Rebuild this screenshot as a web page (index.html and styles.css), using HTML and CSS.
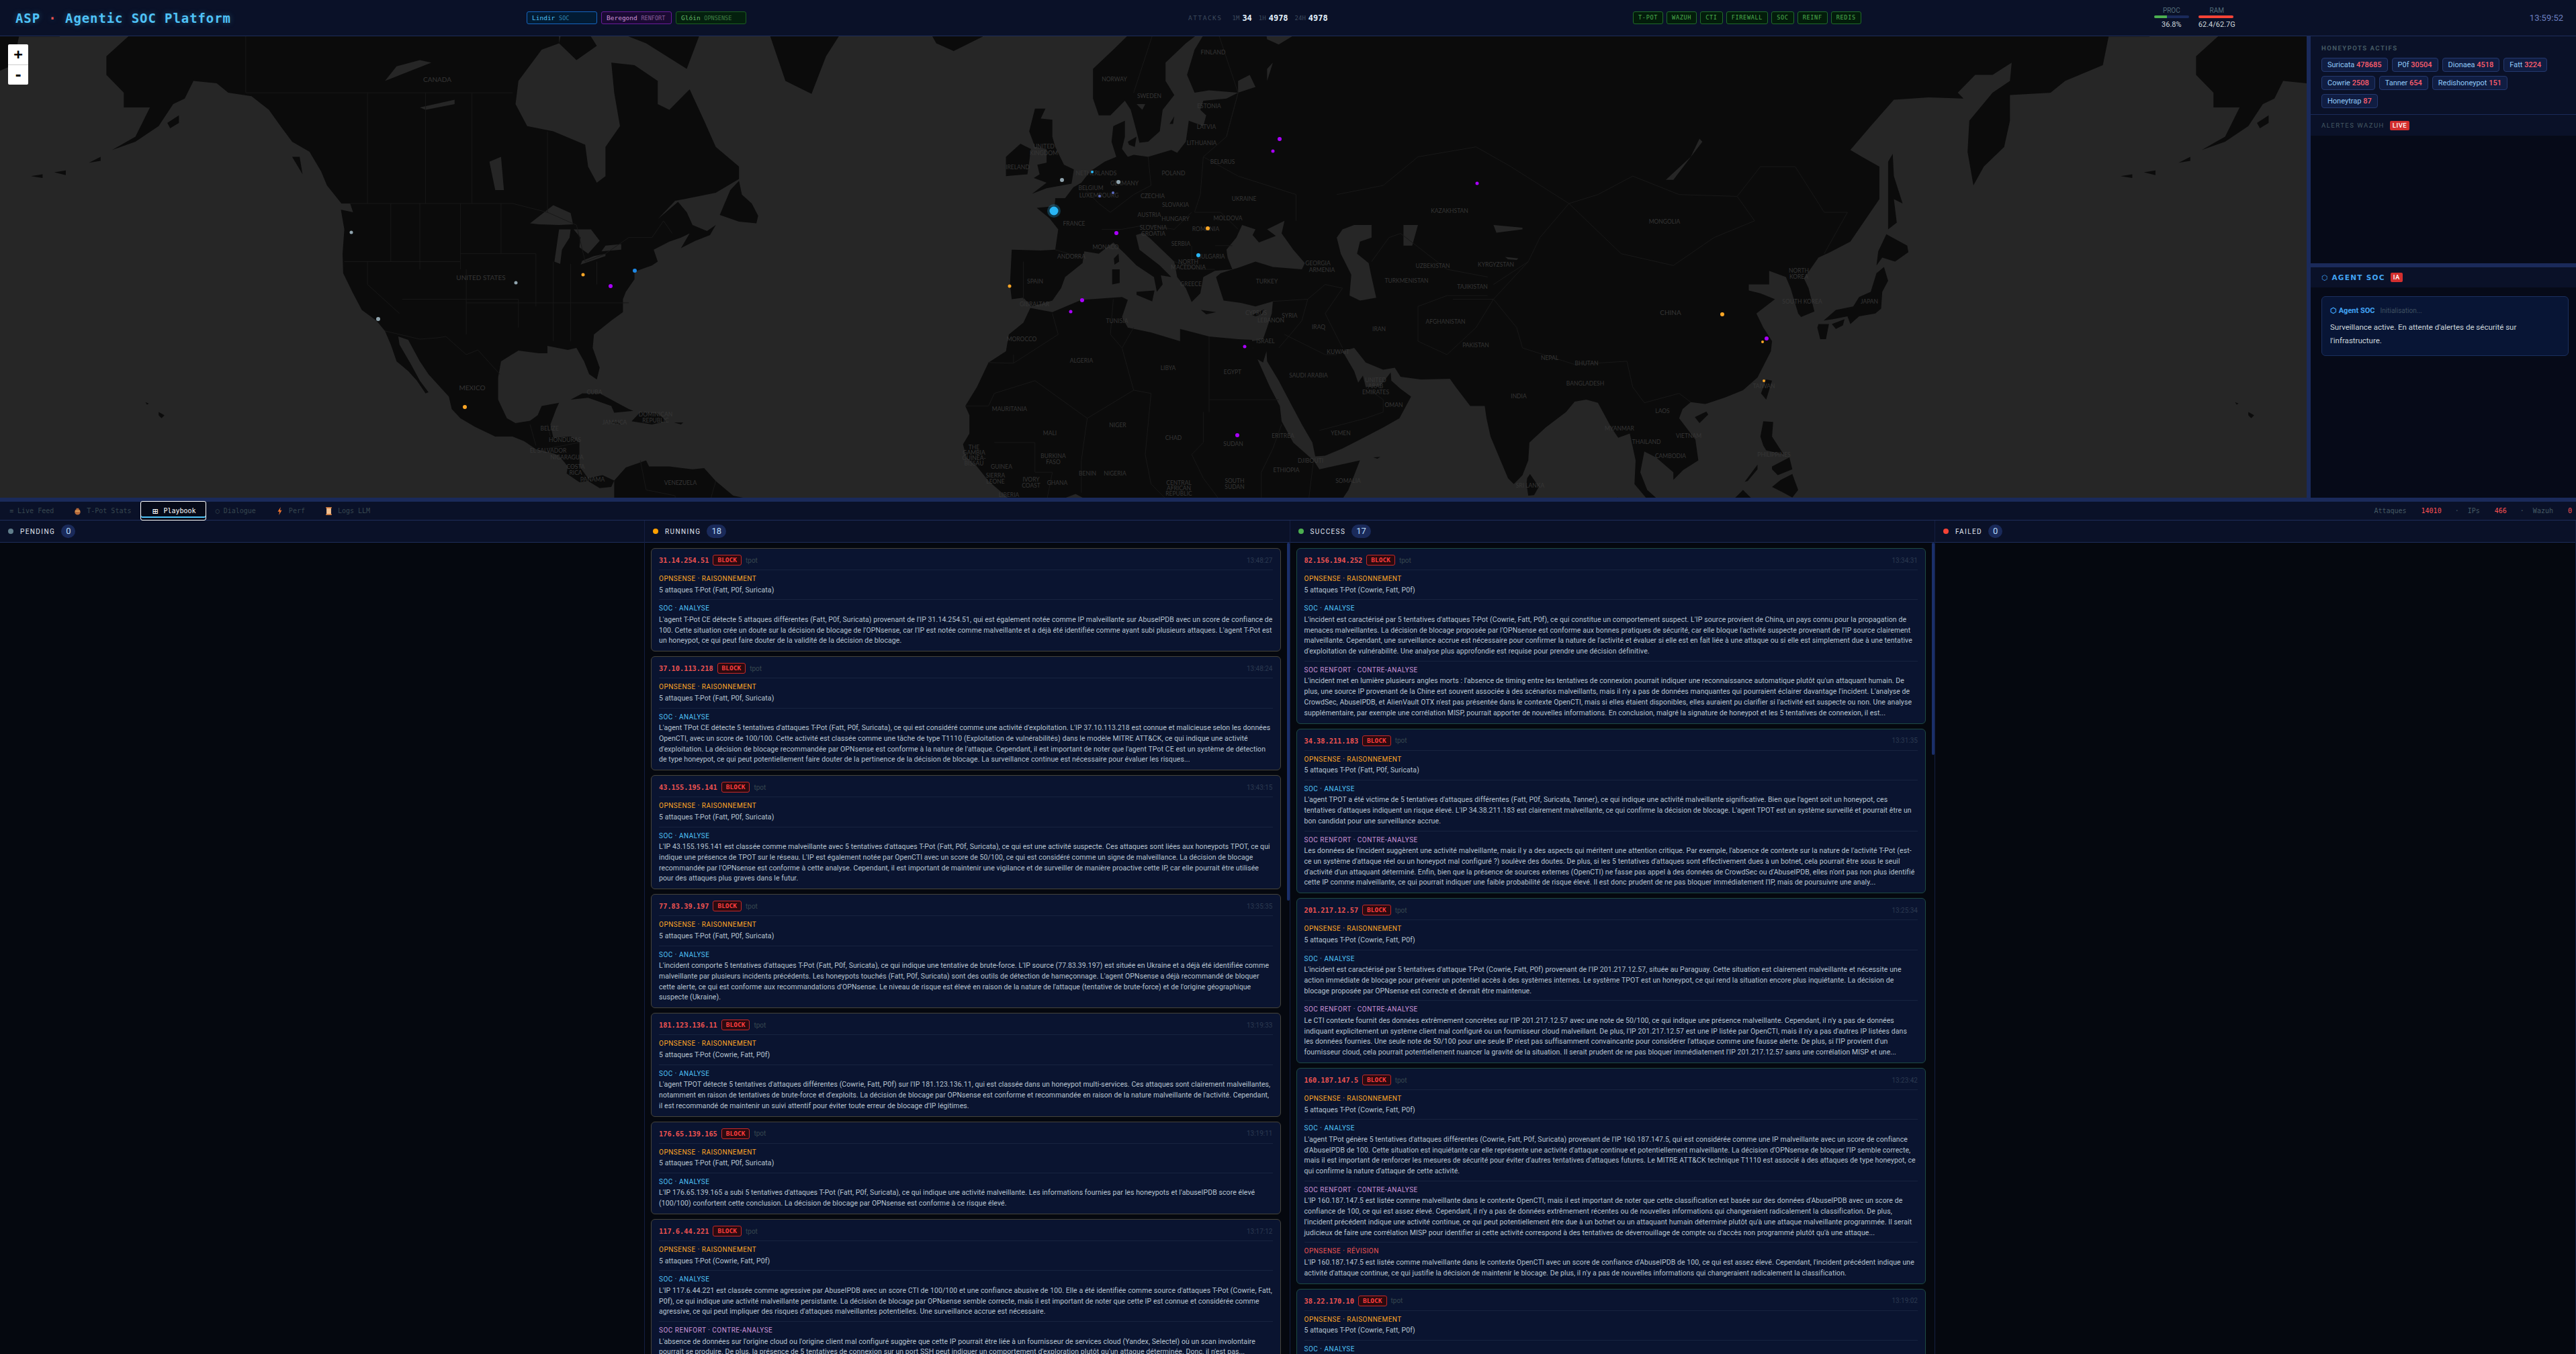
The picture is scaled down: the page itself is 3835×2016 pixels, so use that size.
FILE: index.html
```html
<!DOCTYPE html>
<html lang="fr">
<head>
    <meta charset="UTF-8">
    <title>ASP · Agentic SOC Platform</title>
    <link rel="stylesheet" href="styles.css">
</head>
<body>
    <header class="topbar">
        <div class="brand">ASP <span class="brand-dot">·</span> Agentic SOC Platform</div>
        <div class="pills">
            <div class="pill pill-blue"><b>Lindir</b> <span>SOC</span></div>
            <div class="pill pill-purple"><b>Beregond</b> <span>RENFORT</span></div>
            <div class="pill pill-green"><b>Glóin</b> <span>OPNSENSE</span></div>
        </div>
        <div class="attacks">
            <span class="attacks-title">ATTACKS</span>
            <span class="attacks-key">1M</span><b>34</b>
            <span class="attacks-key">1H</span><b>4978</b>
            <span class="attacks-key">24H</span><b>4978</b>
        </div>
        <div class="services">
            <span class="service">T-POT</span>
            <span class="service">WAZUH</span>
            <span class="service">CTI</span>
            <span class="service">FIREWALL</span>
            <span class="service">SOC</span>
            <span class="service">REINF</span>
            <span class="service">REDIS</span>
        </div>
        <div class="gauges">
            <div class="gauge">
                <div class="gauge-label">PROC</div>
                <div class="gauge-bar"><div class="gauge-fill fill-green" style="width: 36.8%"></div></div>
                <div class="gauge-value">36.8%</div>
            </div>
            <div class="gauge">
                <div class="gauge-label">RAM</div>
                <div class="gauge-bar"><div class="gauge-fill fill-red" style="width: 99.5%"></div></div>
                <div class="gauge-value">62.4/62.7G</div>
            </div>
        </div>
        <div class="clock">13:59:52</div>
    </header>

    <section class="upper">
        <div class="map">
            <svg id="world" class="world" viewBox="0 54 3434 687" xmlns="http://www.w3.org/2000/svg"></svg>
            <div class="zoom-ctl">
                <div class="zoom-btn">+</div>
                <div class="zoom-btn">-</div>
            </div>
        </div>
        <aside class="side">
            <div class="side-block honeypots">
                <div class="side-title">HONEYPOTS ACTIFS</div>
                <div class="pots">
                    <span class="pot">Suricata <b>478685</b></span>
                    <span class="pot">P0f <b>30504</b></span>
                    <span class="pot">Dionaea <b>4518</b></span>
                    <span class="pot">Fatt <b>3224</b></span>
                    <span class="pot">Cowrie <b>2508</b></span>
                    <span class="pot">Tanner <b>654</b></span>
                    <span class="pot">Redishoneypot <b>151</b></span>
                    <span class="pot">Honeytrap <b>87</b></span>
                </div>
            </div>
            <div class="side-head alerts-head">
                <span class="side-title side-title-thin">ALERTES WAZUH</span>
                <span class="tag-red">LIVE</span>
            </div>
            <div class="alerts-body"></div>
            <div class="side-head agent-head">
                <span class="agent-title">⬡ AGENT SOC</span>
                <span class="tag-red">IA</span>
            </div>
            <div class="agent-body">
                <div class="agent-card">
                    <div class="agent-card-head"><b>⬡ Agent SOC</b><span>Initialisation...</span></div>
                    <p>Surveillance active. En attente d'alertes de sécurité sur l'infrastructure.</p>
                </div>
            </div>
        </aside>
    </section>

    <section class="lower">
        <nav class="tabs">
            <div class="tab">≡ Live Feed</div>
            <div class="tab">
                <svg class="tab-icon" viewBox="0 0 12 14"><path d="M3.5 2h5l-.6 1.6c2 1 3 3 3 5 0 3-2 4.9-4.9 4.9S1 11.600 1 8.600c0-2 1-4 3-5z" fill="#b5693a"/><path d="M2 6h8v2H2z" fill="#e0a25c"/></svg>
                T-Pot Stats
            </div>
            <div class="tab tab-on"><span class="tab-glyph">⊞</span>Playbook</div>
            <div class="tab">◯ Dialogue</div>
            <div class="tab">
                <svg class="tab-icon" viewBox="0 0 12 14"><path d="M7.500 0 2.500 8h3l-1 6 5-8.500h-3z" fill="#f2762e"/></svg>
                Perf
            </div>
            <div class="tab">
                <svg class="tab-icon" viewBox="0 0 12 14"><path d="M2 1h8v12H2z" fill="#f4c08e"/><path d="M1 0h10v2H1zM1 12h10v2H1z" fill="#c9763c"/></svg>
                Logs LLM
            </div>
            <div class="tab-stats">
                <span>Attaques</span><b>14010</b><i>·</i>
                <span>IPs</span><b>466</b><i>·</i>
                <span>Wazuh</span><b>0</b>
            </div>
        </nav>

        <div class="board">
            <div class="col">
                <div class="col-head"><span class="dot dot-grey"></span><span class="col-name">PENDING</span><span class="count">0</span></div>
                <div class="col-body"></div>
            </div>

            <div class="col">
                <div class="col-head"><span class="dot dot-amber"></span><span class="col-name">RUNNING</span><span class="count">18</span></div>
                <div class="col-body">
                    <div class="thumb thumb-running"></div>
                    <div class="cards">
                        <article class="card card-running">
                            <div class="card-head"><span class="ip">31.14.254.51</span><span class="block">BLOCK</span><span class="src">tpot</span><time>13:48:27</time></div>
                            <div class="part"><h4 class="lab-fw">OPNSENSE · RAISONNEMENT</h4><p>5 attaques T-Pot (Fatt, P0f, Suricata)</p></div>
                            <div class="part"><h4 class="lab-soc">SOC · ANALYSE</h4><p>L'agent T-Pot CE détecte 5 attaques différentes (Fatt, P0f, Suricata) provenant de l'IP 31.14.254.51, qui est également notée comme IP malveillante sur AbuseIPDB avec un score de confiance de 100. Cette situation crée un doute sur la décision de blocage de l'OPNsense, car l'IP est notée comme malveillante et a déjà été identifiée comme ayant subi plusieurs attaques. L'agent T-Pot est un honeypot, ce qui peut faire douter de la validité de la décision de blocage.</p></div>
                        </article>
                        <article class="card card-running">
                            <div class="card-head"><span class="ip">37.10.113.218</span><span class="block">BLOCK</span><span class="src">tpot</span><time>13:48:24</time></div>
                            <div class="part"><h4 class="lab-fw">OPNSENSE · RAISONNEMENT</h4><p>5 attaques T-Pot (Fatt, P0f, Suricata)</p></div>
                            <div class="part"><h4 class="lab-soc">SOC · ANALYSE</h4><p>L'agent TPot CE détecte 5 tentatives d'attaques T-Pot (Fatt, P0f, Suricata), ce qui est considéré comme une activité d'exploitation. L'IP 37.10.113.218 est connue et malicieuse selon les données OpenCTI, avec un score de 100/100. Cette activité est classée comme une tâche de type T1110 (Exploitation de vulnérabilités) dans le modèle MITRE ATT&amp;CK, ce qui indique une activité d'exploitation. La décision de blocage recommandée par OPNsense est conforme à la nature de l'attaque. Cependant, il est important de noter que l'agent TPot CE est un système de détection de type honeypot, ce qui peut potentiellement faire douter de la pertinence de la décision de blocage. La surveillance continue est nécessaire pour évaluer les risques...</p></div>
                        </article>
                        <article class="card card-running">
                            <div class="card-head"><span class="ip">43.155.195.141</span><span class="block">BLOCK</span><span class="src">tpot</span><time>13:43:15</time></div>
                            <div class="part"><h4 class="lab-fw">OPNSENSE · RAISONNEMENT</h4><p>5 attaques T-Pot (Fatt, P0f, Suricata)</p></div>
                            <div class="part"><h4 class="lab-soc">SOC · ANALYSE</h4><p>L'IP 43.155.195.141 est classée comme malveillante avec 5 tentatives d'attaques T-Pot (Fatt, P0f, Suricata), ce qui est une activité suspecte. Ces attaques sont liées aux honeypots TPOT, ce qui indique une présence de TPOT sur le réseau. L'IP est également notée par OpenCTI avec un score de 50/100, ce qui est considéré comme un signe de malveillance. La décision de blocage recommandée par l'OPNsense est conforme à cette analyse. Cependant, il est important de maintenir une vigilance et de surveiller de manière proactive cette IP, car elle pourrait être utilisée pour des attaques plus graves dans le futur.</p></div>
                        </article>
                        <article class="card card-running">
                            <div class="card-head"><span class="ip">77.83.39.197</span><span class="block">BLOCK</span><span class="src">tpot</span><time>13:35:35</time></div>
                            <div class="part"><h4 class="lab-fw">OPNSENSE · RAISONNEMENT</h4><p>5 attaques T-Pot (Fatt, P0f, Suricata)</p></div>
                            <div class="part"><h4 class="lab-soc">SOC · ANALYSE</h4><p>L'incident comporte 5 tentatives d'attaques T-Pot (Fatt, P0f, Suricata), ce qui indique une tentative de brute-force. L'IP source (77.83.39.197) est située en Ukraine et a déjà été identifiée comme malveillante par plusieurs incidents précédents. Les honeypots touchés (Fatt, P0f, Suricata) sont des outils de détection de hameçonnage. L'agent OPNsense a déjà recommandé de bloquer cette alerte, ce qui est conforme aux recommandations d'OPNsense. Le niveau de risque est élevé en raison de la nature de l'attaque (tentative de brute-force) et de l'origine géographique suspecte (Ukraine).</p></div>
                        </article>
                        <article class="card card-running">
                            <div class="card-head"><span class="ip">181.123.136.11</span><span class="block">BLOCK</span><span class="src">tpot</span><time>13:19:33</time></div>
                            <div class="part"><h4 class="lab-fw">OPNSENSE · RAISONNEMENT</h4><p>5 attaques T-Pot (Cowrie, Fatt, P0f)</p></div>
                            <div class="part"><h4 class="lab-soc">SOC · ANALYSE</h4><p>L'agent TPOT détecte 5 tentatives d'attaques différentes (Cowrie, Fatt, P0f) sur l'IP 181.123.136.11, qui est classée dans un honeypot multi-services. Ces attaques sont clairement malveillantes, notamment en raison de tentatives de brute-force et d'exploits. La décision de blocage par OPNsense est conforme et recommandée en raison de la nature malveillante de l'activité. Cependant, il est recommandé de maintenir un suivi attentif pour éviter toute erreur de blocage d'IP légitimes.</p></div>
                        </article>
                        <article class="card card-running">
                            <div class="card-head"><span class="ip">176.65.139.165</span><span class="block">BLOCK</span><span class="src">tpot</span><time>13:19:11</time></div>
                            <div class="part"><h4 class="lab-fw">OPNSENSE · RAISONNEMENT</h4><p>5 attaques T-Pot (Fatt, P0f, Suricata)</p></div>
                            <div class="part"><h4 class="lab-soc">SOC · ANALYSE</h4><p>L'IP 176.65.139.165 a subi 5 tentatives d'attaques T-Pot (Fatt, P0f, Suricata), ce qui indique une activité malveillante. Les informations fournies par les honeypots et l'abuseIPDB score élevé (100/100) confortent cette conclusion. La décision de blocage par OPNsense est conforme à ce risque élevé.</p></div>
                        </article>
                        <article class="card card-running">
                            <div class="card-head"><span class="ip">117.6.44.221</span><span class="block">BLOCK</span><span class="src">tpot</span><time>13:17:12</time></div>
                            <div class="part"><h4 class="lab-fw">OPNSENSE · RAISONNEMENT</h4><p>5 attaques T-Pot (Cowrie, Fatt, P0f)</p></div>
                            <div class="part"><h4 class="lab-soc">SOC · ANALYSE</h4><p>L'IP 117.6.44.221 est classée comme agressive par AbuseIPDB avec un score CTI de 100/100 et une confiance abusive de 100. Elle a été identifiée comme source d'attaques T-Pot (Cowrie, Fatt, P0f), ce qui indique une activité malveillante persistante. La décision de blocage par OPNsense semble correcte, mais il est important de noter que cette IP est connue et considérée comme agressive, ce qui peut impliquer des risques d'attaques malveillantes potentielles. Une surveillance accrue est nécessaire.</p></div>
                            <div class="part"><h4 class="lab-reinf">SOC RENFORT · CONTRE-ANALYSE</h4><p>L'absence de données sur l'origine cloud ou l'origine client mal configuré suggère que cette IP pourrait être liée à un fournisseur de services cloud (Yandex, Selectel) où un scan involontaire pourrait se produire. De plus, la présence de 5 tentatives de connexion sur un port SSH peut indiquer un comportement d'exploration plutôt qu'un attaque déterminée. Donc, il n'est pas...</p></div>
                        </article>
                    </div>
                </div>
            </div>

            <div class="col">
                <div class="col-head"><span class="dot dot-green"></span><span class="col-name">SUCCESS</span><span class="count">17</span></div>
                <div class="col-body">
                    <div class="thumb thumb-success"></div>
                    <div class="cards">
                        <article class="card card-success">
                            <div class="card-head"><span class="ip">82.156.194.252</span><span class="block">BLOCK</span><span class="src">tpot</span><time>13:34:31</time></div>
                            <div class="part"><h4 class="lab-fw">OPNSENSE · RAISONNEMENT</h4><p>5 attaques T-Pot (Cowrie, Fatt, P0f)</p></div>
                            <div class="part"><h4 class="lab-soc">SOC · ANALYSE</h4><p>L'incident est caractérisé par 5 tentatives d'attaques T-Pot (Cowrie, Fatt, P0f), ce qui constitue un comportement suspect. L'IP source provient de China, un pays connu pour la propagation de menaces malveillantes. La décision de blocage proposée par l'OPNsense est conforme aux bonnes pratiques de sécurité, car elle bloque l'activité suspecte provenant de l'IP source clairement malveillante. Cependant, une surveillance accrue est nécessaire pour confirmer la nature de l'activité et évaluer si elle est en fait liée à une attaque ou si elle est simplement due à une tentative d'exploitation de vulnérabilité. Une analyse plus approfondie est requise pour prendre une décision définitive.</p></div>
                            <div class="part"><h4 class="lab-reinf">SOC RENFORT · CONTRE-ANALYSE</h4><p>L'incident met en lumière plusieurs angles morts : l'absence de timing entre les tentatives de connexion pourrait indiquer une reconnaissance automatique plutôt qu'un attaquant humain. De plus, une source IP provenant de la Chine est souvent associée à des scénarios malveillants, mais il n'y a pas de données manquantes qui pourraient éclairer davantage l'incident. L'analyse de CrowdSec, AbuseIPDB, et AlienVault OTX n'est pas présentée dans le contexte OpenCTI, mais si elles étaient disponibles, elles auraient pu clarifier si l'activité est suspecte ou non. Une analyse supplémentaire, par exemple une corrélation MISP, pourrait apporter de nouvelles informations. En conclusion, malgré la signature de honeypot et les 5 tentatives de connexion, il est...</p></div>
                        </article>
                        <article class="card card-success">
                            <div class="card-head"><span class="ip">34.38.211.183</span><span class="block">BLOCK</span><span class="src">tpot</span><time>13:31:35</time></div>
                            <div class="part"><h4 class="lab-fw">OPNSENSE · RAISONNEMENT</h4><p>5 attaques T-Pot (Fatt, P0f, Suricata)</p></div>
                            <div class="part"><h4 class="lab-soc">SOC · ANALYSE</h4><p>L'agent TPOT a été victime de 5 tentatives d'attaques différentes (Fatt, P0f, Suricata, Tanner), ce qui indique une activité malveillante significative. Bien que l'agent soit un honeypot, ces tentatives d'attaques indiquent un risque élevé. L'IP 34.38.211.183 est clairement malveillante, ce qui confirme la décision de blocage. L'agent TPOT est un système surveillé et pourrait être un bon candidat pour une surveillance accrue.</p></div>
                            <div class="part"><h4 class="lab-reinf">SOC RENFORT · CONTRE-ANALYSE</h4><p>Les données de l'incident suggèrent une activité malveillante, mais il y a des aspects qui méritent une attention critique. Par exemple, l'absence de contexte sur la nature de l'activité T-Pot (est-ce un système d'attaque réel ou un honeypot mal configuré ?) soulève des doutes. De plus, si les 5 tentatives d'attaques sont effectivement dues à un botnet, cela pourrait être sous le seuil d'activité d'un attaquant déterminé. Enfin, bien que la présence de sources externes (OpenCTI) ne fasse pas appel à des données de CrowdSec ou d'AbuseIPDB, elles n'ont pas non plus identifié cette IP comme malveillante, ce qui pourrait indiquer une faible probabilité de risque élevé. Il est donc prudent de ne pas bloquer immédiatement l'IP, mais de poursuivre une analy...</p></div>
                        </article>
                        <article class="card card-success">
                            <div class="card-head"><span class="ip">201.217.12.57</span><span class="block">BLOCK</span><span class="src">tpot</span><time>13:25:34</time></div>
                            <div class="part"><h4 class="lab-fw">OPNSENSE · RAISONNEMENT</h4><p>5 attaques T-Pot (Cowrie, Fatt, P0f)</p></div>
                            <div class="part"><h4 class="lab-soc">SOC · ANALYSE</h4><p>L'incident est caractérisé par 5 tentatives d'attaque T-Pot (Cowrie, Fatt, P0f) provenant de l'IP 201.217.12.57, située au Paraguay. Cette situation est clairement malveillante et nécessite une action immédiate de blocage pour prévenir un potentiel accès à des systèmes internes. Le système TPOT est un honeypot, ce qui rend la situation encore plus inquiétante. La décision de blocage proposée par OPNsense est correcte et devrait être maintenue.</p></div>
                            <div class="part"><h4 class="lab-reinf">SOC RENFORT · CONTRE-ANALYSE</h4><p>Le CTI contexte fournit des données extrêmement concrètes sur l'IP 201.217.12.57 avec une note de 50/100, ce qui indique une présence malveillante. Cependant, il n'y a pas de données indiquant explicitement un système client mal configuré ou un fournisseur cloud malveillant. De plus, l'IP 201.217.12.57 est une IP listée par OpenCTI, mais il n'y a pas d'autres IP listées dans les données fournies. Une seule note de 50/100 pour une seule IP n'est pas suffisamment convaincante pour considérer l'attaque comme une fausse alerte. De plus, si l'IP provient d'un fournisseur cloud, cela pourrait potentiellement nuancer la gravité de la situation. Il serait prudent de ne pas bloquer immédiatement l'IP 201.217.12.57 sans une corrélation MISP et une...</p></div>
                        </article>
                        <article class="card card-success">
                            <div class="card-head"><span class="ip">160.187.147.5</span><span class="block">BLOCK</span><span class="src">tpot</span><time>13:23:42</time></div>
                            <div class="part"><h4 class="lab-fw">OPNSENSE · RAISONNEMENT</h4><p>5 attaques T-Pot (Cowrie, Fatt, P0f)</p></div>
                            <div class="part"><h4 class="lab-soc">SOC · ANALYSE</h4><p>L'agent TPot génère 5 tentatives d'attaques différentes (Cowrie, Fatt, P0f, Suricata) provenant de l'IP 160.187.147.5, qui est considérée comme une IP malveillante avec un score de confiance d'AbuseIPDB de 100. Cette situation est inquiétante car elle représente une activité d'attaque continue et potentiellement malveillante. La décision d'OPNsense de bloquer l'IP semble correcte, mais il est important de renforcer les mesures de sécurité pour éviter d'autres tentatives d'attaques futures. Le MITRE ATT&amp;CK technique T1110 est associé à des attaques de type honeypot, ce qui confirme la nature d'attaque de cette activité.</p></div>
                            <div class="part"><h4 class="lab-reinf">SOC RENFORT · CONTRE-ANALYSE</h4><p>L'IP 160.187.147.5 est listée comme malveillante dans le contexte OpenCTI, mais il est important de noter que cette classification est basée sur des données d'AbuseIPDB avec un score de confiance de 100, ce qui est assez élevé. Cependant, il n'y a pas de données extrêmement récentes ou de nouvelles informations qui changeraient radicalement la classification. De plus, l'incident précédent indique une activité continue, ce qui peut potentiellement être due à un botnet ou un attaquant humain déterminé plutôt qu'à une attaque malveillante programmée. Il serait judicieux de faire une corrélation MISP pour identifier si cette activité correspond à des tentatives de déverrouillage de compte ou d'accès non programmé plutôt qu'à une attaque...</p></div>
                            <div class="part"><h4 class="lab-rev">OPNSENSE · RÉVISION</h4><p>L'IP 160.187.147.5 est listée comme malveillante dans le contexte OpenCTI avec un score de confiance d'AbuseIPDB de 100, ce qui est assez élevé. Cependant, l'incident précédent indique une activité d'attaque continue, ce qui justifie la décision de maintenir le blocage. De plus, il n'y a pas de nouvelles informations qui changeraient radicalement la classification.</p></div>
                        </article>
                        <article class="card card-success">
                            <div class="card-head"><span class="ip">38.22.170.10</span><span class="block">BLOCK</span><span class="src">tpot</span><time>13:19:02</time></div>
                            <div class="part"><h4 class="lab-fw">OPNSENSE · RAISONNEMENT</h4><p>5 attaques T-Pot (Cowrie, Fatt, P0f)</p></div>
                            <div class="part"><h4 class="lab-soc">SOC · ANALYSE</h4></div>
                        </article>
                    </div>
                </div>
            </div>

            <div class="col">
                <div class="col-head"><span class="dot dot-red"></span><span class="col-name">FAILED</span><span class="count">0</span></div>
                <div class="col-body"></div>
            </div>
        </div>
    </section>

    <script src="map.js"></script>
</body>
</html>
```

FILE: styles.css
```css
* {
    box-sizing: border-box;
}
html, body {
    margin: 0;
    height: 100%;
}
body {
    display: flex;
    flex-direction: column;
    height: 2016px;
    overflow: hidden;
    background-color: #05080f;
    color: #cfd8dc;
    font-family: Roboto, "Liberation Sans", sans-serif;
}

/* barre du haut */
.topbar {
    display: flex;
    align-items: center;
    flex: 0 0 54px;
    padding: 0 19px 0 23px;
    background-color: #0a1128;
    border-bottom: 1px solid #1e2d5a;
}
.brand {
    width: 321px;
    white-space: nowrap;
    font-family: "DejaVu Sans Mono", monospace;
    font-size: 19px;
    font-weight: bold;
    letter-spacing: 0.9px;
    color: #4fc3f7;
    text-shadow: 0 0 8px rgba(79, 195, 247, 0.35);
}
.brand-dot {
    color: #ef5350;
}
.pills {
    display: flex;
    gap: 6px;
    margin-left: 440px;
}
.pill {
    width: 105px;
    height: 19px;
    padding: 0 7px;
    border: 1px solid;
    border-radius: 3px;
    font-family: "DejaVu Sans Mono", monospace;
    font-size: 9.500px;
    line-height: 17px;
    white-space: nowrap;
    overflow: hidden;
}
.pill b {
    font-weight: normal;
}
.pill span {
    font-size: 8.500px;
    opacity: 0.6;
}
.pill-blue {
    color: #4fc3f7;
    background-color: #021b33;
    border-color: #1565c0;
}
.pill-purple {
    color: #ce93d8;
    background-color: #1a0a33;
    border-color: #6a1b9a;
}
.pill-green {
    color: #66bb6a;
    background-color: #04200e;
    border-color: #1b5e20;
}
.attacks {
    display: flex;
    align-items: center;
    width: 224px;
    margin-left: 658px;
    font-family: "DejaVu Sans Mono", monospace;
    white-space: nowrap;
}
.attacks-title {
    margin-right: 15px;
    font-size: 9.500px;
    letter-spacing: 1.500px;
    color: #3d4a5c;
}
.attacks-key {
    margin-right: 4px;
    font-size: 9px;
    color: #3d4a5c;
}
.attacks b {
    margin-right: 10px;
    font-size: 12px;
    color: #e3f2fd;
}
.services {
    display: flex;
    gap: 5px;
    margin-left: 438px;
}
.service {
    height: 19px;
    padding: 0 7px;
    background-color: #031c0b;
    border: 1px solid #1f6b2a;
    border-radius: 3px;
    font-family: "DejaVu Sans Mono", monospace;
    font-size: 8.500px;
    letter-spacing: 0.7px;
    line-height: 17px;
    color: #4caf50;
}
.gauges {
    display: flex;
    gap: 14px;
    margin-left: 436px;
    text-align: center;
}
.gauge-label {
    font-size: 10px;
    line-height: 12px;
    color: #546e7a;
}
.gauge-bar {
    width: 52px;
    height: 4px;
    margin: 1px 0 3px;
    background-color: #1a2a5a;
    border-radius: 2px;
    overflow: hidden;
}
.gauge-fill {
    height: 100%;
}
.fill-green {
    background-color: #4caf50;
}
.fill-red {
    background-color: #f44336;
}
.gauge-value {
    font-size: 11px;
    line-height: 13px;
    white-space: nowrap;
    color: #cfd8dc;
}
.clock {
    margin-left: auto;
    font-size: 13px;
    color: #6a7fc0;
}

/* carte + panneau droit */
.upper {
    display: flex;
    flex: 0 0 687px;
    background-color: #1a2a5a;
}
.map {
    position: relative;
    width: 3434px;
    height: 687px;
    background-color: #262626;
    overflow: hidden;
}
.world {
    display: block;
    width: 3434px;
    height: 687px;
}
.zoom-ctl {
    position: absolute;
    top: 12px;
    left: 12px;
    width: 30px;
    background-color: #fff;
    border-radius: 2px;
}
.zoom-btn {
    height: 30px;
    font-family: "DejaVu Sans Mono", monospace;
    font-size: 22px;
    font-weight: bold;
    line-height: 29px;
    text-align: center;
    color: #000;
}
.zoom-btn + .zoom-btn {
    border-top: 1px solid #ccc;
}
.side {
    display: flex;
    flex-direction: column;
    width: 395px;
    margin-left: 6px;
    background-color: #060a18;
}
.honeypots {
    height: 117px;
    padding: 12px 16px 0 16px;
    background-color: #0a1128;
    border-bottom: 1px solid #1a2a5a;
}
.side-title {
    font-size: 9.500px;
    font-weight: bold;
    letter-spacing: 1.500px;
    line-height: 11px;
    color: #455a64;
}
.side-title-thin {
    font-weight: normal;
}
.pots {
    display: flex;
    flex-wrap: wrap;
    gap: 6px;
    margin-top: 9px;
}
.pot {
    height: 21px;
    padding: 0 8px;
    background-color: #101d42;
    border: 1px solid #24386e;
    border-radius: 4px;
    font-size: 11px;
    line-height: 19px;
    color: #90caf9;
}
.pot b {
    font-weight: 500;
    color: #ff5d6c;
}
.side-head {
    display: flex;
    align-items: center;
    gap: 8px;
    padding-left: 16px;
    background-color: #0a1128;
}
.alerts-head {
    flex: 0 0 31px;
}
.agent-head {
    flex: 0 0 30px;
}
.alerts-body {
    flex: 0 0 196px;
    border-bottom: 6px solid #1a2a5a;
}
.tag-red {
    padding: 0 4px;
    background-color: #d32f2f;
    border-radius: 2px;
    font-size: 9.500px;
    font-weight: 500;
    letter-spacing: 0.5px;
    line-height: 14px;
    color: #fff;
}
.agent-title {
    font-family: "DejaVu Sans", sans-serif;
    font-size: 10.500px;
    font-weight: bold;
    letter-spacing: 1.300px;
    color: #42a5f5;
}
.agent-body {
    padding: 13px 11px 0 16px;
}
.agent-card {
    height: 89px;
    padding: 14px 12px;
    background-color: #081535;
    border: 1px solid #1a2f5e;
    border-radius: 6px;
}
.agent-card-head {
    display: flex;
    align-items: baseline;
    gap: 8px;
    line-height: 14px;
}
.agent-card-head b {
    font-size: 11px;
    color: #42a5f5;
}
.agent-card-head span {
    font-size: 10px;
    color: #3f5060;
}
.agent-card p {
    margin: 7px 0 0;
    font-size: 11.500px;
    line-height: 20px;
    color: #cfd8dc;
}

/* bas de page */
.lower {
    display: flex;
    flex-direction: column;
    flex: 1;
    min-height: 0;
    border-top: 6px solid #1a2a5a;
}
.tabs {
    display: flex;
    flex: 0 0 28px;
    align-items: stretch;
    background-color: #0a1128;
    border-bottom: 1px solid #1e2d5a;
    font-family: "DejaVu Sans Mono", monospace;
    font-size: 10px;
}
.tab {
    display: flex;
    align-items: center;
    gap: 6px;
    padding: 0 14px;
    color: #37474f;
    white-space: nowrap;
}
.tab-on {
    height: 29px;
    margin: -1px 0;
    color: #fff;
    background-color: #060a18;
    border: 1px solid #fff;
    border-radius: 3px;
    box-shadow: inset 0 -3px 0 #060a18, inset 0 -5px 0 #4fc3f7;
}
.tab-glyph {
    width: 13px;
    font-size: 14px;
    line-height: 14px;
    text-align: center;
}
.tab-icon {
    width: 15px;
    height: 12px;
}
.tab-stats {
    display: flex;
    align-items: center;
    margin-left: auto;
    padding-right: 6px;
    color: #455a64;
    white-space: nowrap;
}
.tab-stats b {
    margin-left: 22px;
    color: #ff5252;
    font-weight: normal;
}
.tab-stats i {
    margin: 0 13px 0 20px;
    font-style: normal;
}
.board {
    display: grid;
    grid-template-columns: 960px 960.500px 960.500px 1fr;
    flex: 1;
    min-height: 0;
}
.col {
    display: flex;
    flex-direction: column;
    min-height: 0;
    border-right: 1px solid #141f42;
}
.col-head {
    display: flex;
    flex: 0 0 33px;
    align-items: center;
    padding-left: 12px;
    background-color: #0a1128;
    border-bottom: 1px solid #1e2d5a;
}
.dot {
    width: 8px;
    height: 8px;
    margin-right: 10px;
    border-radius: 50%;
}
.dot-grey {
    background-color: #607d8b;
}
.dot-amber {
    background-color: #ffa000;
}
.dot-green {
    background-color: #4caf50;
}
.dot-red {
    background-color: #f44336;
}
.col-name {
    font-size: 10px;
    letter-spacing: 1.400px;
    color: #e0e6f0;
}
.count {
    height: 20px;
    margin-left: 9px;
    padding: 0 7px;
    background-color: #1a2a5a;
    border-radius: 10px;
    font-size: 13px;
    line-height: 20px;
    color: #bbdefb;
}
.col-body {
    position: relative;
    flex: 1;
    min-height: 0;
    overflow: hidden;
    background-color: #05080f;
}
.thumb {
    position: absolute;
    top: 0;
    right: 0;
    width: 4px;
    background-color: #1a2f6a;
    border-radius: 2px;
}
.thumb-running {
    height: 533px;
}
.thumb-success {
    height: 316px;
}
.cards {
    display: flex;
    flex-direction: column;
    gap: 7px;
    padding: 8px 13px 0 9px;
}
.card {
    flex: none;
    padding: 9px 11px 7.250px;
    background-color: #0a1430;
    border: 1px solid #2f3440;
    border-radius: 6px;
}
.card-running {
    border-color: #45433a;
}
.card-success {
    border-color: #1d4a43;
}
.card-head {
    display: flex;
    align-items: center;
    height: 22px;
    padding-bottom: 6px;
}
.ip {
    font-family: "DejaVu Sans Mono", monospace;
    font-size: 10.300px;
    font-weight: bold;
    color: #ef5350;
}
.block {
    height: 16px;
    margin-left: 6px;
    padding: 0 6px;
    background-color: #2a0a10;
    border: 1px solid #c62828;
    border-radius: 3px;
    font-family: "DejaVu Sans Mono", monospace;
    font-size: 9.500px;
    font-weight: bold;
    line-height: 14px;
    color: #ff3d3d;
}
.src {
    margin-left: 6px;
    font-size: 10px;
    color: #37474f;
}
.card-head time {
    margin-left: auto;
    font-size: 10px;
    color: #2c3a50;
}
.part {
    padding: 6px 0 6px;
    border-top: 1px solid #17233f;
}
.part:last-child {
    padding-bottom: 0;
}
.part h4 {
    margin: 0 0 2.500px;
    font-size: 10px;
    font-weight: normal;
    letter-spacing: 0.5px;
    line-height: 13px;
}
.part p {
    margin: 0;
    font-size: 10.500px;
    letter-spacing: 0.09px;
    line-height: 15.750px;
    color: #b9c6d2;
}
.lab-fw {
    color: #ffa726;
}
.lab-soc {
    color: #4fc3f7;
}
.lab-reinf {
    color: #ce93d8;
}
.lab-rev {
    color: #ef5350;
}
```

FILE: map.js
```js
// projection : x = 1584 + 8.64 * lon, equateur a y = 790, R = 495
const NS = 'http://www.w3.org/2000/svg';
const WORLD = 3111;

function px(lon) {
    return 1584 + 8.64 * lon;
}
function py(lat) {
    const rad = lat * Math.PI / 180;
    return 790 - 495 * Math.log(Math.tan(Math.PI / 4 + rad / 2));
}

const land = [
    // amerique du nord
    [-166,70,-166,68,-163,66.5,-168,65.6,-161,64.6,-165,63,-165,61.5,-162,60,-162,58.7,-157.5,58.7,-160,56,-164,54.7,-160,55.5,-156,57,-153.5,59,-151.5,59.5,-150,61,-146,60.8,-144,60,-140,59.7,-137,58.5,-135,57,-133,55.5,-130,54.5,-128,52.5,-127,51,-124.5,49,-123,49,-122.5,48,-124.6,48.3,-124,46,-124.3,43,-124.2,40.5,-122.5,37.8,-121,35.5,-118.5,34,-117,32.5,-116,30.5,-115,28,-113,26.5,-111.5,25,-110,23,-109.5,23.2,-111,25,-112.5,27.5,-114.5,30.5,-114.7,31.7,-113,31.2,-111,28,-109.5,26,-106,22.5,-105.5,20.5,-104,19,-101.5,17.6,-98,16,-95,16,-93,15.2,-91,13.9,-88,13.2,-87,12.8,-85.5,11,-85.7,9.8,-83.5,8.3,-82,8.5,-80,7.3,-78,7.5,-77.5,8.6,-79.5,9.5,-82,9,-83.5,11,-83.5,15,-85,16,-88,15.8,-88.5,18,-87.5,20.5,-87,21.5,-90,21,-90.7,19.5,-92,18.6,-94.5,18.2,-96,19,-97.5,22,-97.5,25.5,-97,28,-94,29.6,-90.5,29.2,-89,29.2,-89,30.3,-85.5,29.7,-84,30,-82.7,28,-81.8,26,-80.5,25.2,-80,27,-81.2,30,-81,32,-78,34,-76,35.2,-76,37,-75.5,38,-74,39.7,-74,40.7,-71,41.5,-70,42,-70.7,43.5,-68,44.5,-66,45,-64.5,45.5,-66,43.7,-63.5,44.6,-61,45.3,-60,46.5,-61.5,45.8,-64,46.5,-65,48,-66.5,49.2,-70,47.2,-67,49.3,-60,50.2,-56,51.7,-56,53,-60,55,-62,57.5,-64.5,60.3,-68,58.5,-70,59,-70,61,-74,62.3,-78,62.5,-77.5,60,-76.5,57,-79,55,-79,52,-80.5,51.3,-82,53,-82.5,55.2,-88,56.5,-92.5,57,-94.5,59,-94,61,-90,63.5,-87,64,-86,66,-82,67,-82,70],
    [-80,70,-72,67.5,-72,66,-78,65,-72,64,-65,62,-62,65.5,-65,67,-65,70],
    [-87,65.5,-83,65.5,-80.5,63.8,-84,62.7,-87,64],
    [-59.3,47.7,-56,46.9,-53,46.7,-52.7,47.6,-53.8,49,-55.5,50,-56,51.5,-57.5,50.5],
    [-53,70,-51,65,-48,61,-43.5,59.9,-41,63,-37,65.7,-30,68,-22,70],
    [-24,65.5,-22,64,-19,63.4,-14,64.5,-14.5,66,-18,66.2,-22,66.4],
    [-85,22,-83,23,-80,23,-75,20.5,-74.2,20.2,-77.5,19.9,-78,21,-82,22.3],
    [-74.5,18.5,-73,20,-70,19.8,-68.5,18.5,-71,18],
    [-78.3,18.3,-76.3,18,-77,18.4],
    [-67.2,18.3,-65.6,18.3,-66,18],
    [-156,20,-155,19.5,-155.5,19,-156,19.5],
    [-158.3,21.6,-157.7,21.4,-158,21.2],
    [-154.5,57.3,-152.5,58,-152.5,57.3,-154,56.8],
    [-133,54,-131.7,54,-131.2,52.2],
    [-168,53.4,-166,54,-166,53.6],
    [-174,52.4,-172,52.6,-172,52.1],
    [-178,52,-176,52.2,-176,51.8],
    // amerique du sud
    [-77.5,8.6,-75.5,10.8,-72,12,-71.5,11,-68,11,-64,10.5,-62,10.7,-60,8.5,-57,6,-52,5,-51,3,-51,0,-80,0,-78,2,-77.5,4,-77.5,7],
    // eurasie
    [20,70,14,67.5,12,65,8.5,63.5,5,62,5,59.5,6,58,8,58,10.5,59.3,11.5,58.5,12.5,56.5,13,55.4,14.5,55.5,16.5,56.5,17,58.5,19,59.8,17.5,61,17.5,62.5,21,64,25,65.3,22.5,63.5,21.2,61.5,22.5,60,25,60.2,30,60,28,59.5,24,59.3,23.5,58.5,24.5,58,24,57,21.5,57.5,21,55.5,19.5,54.4,18.5,54.7,14.5,54,12,54.2,11,54,10,54.8,10.5,56,10.5,57.5,8.5,57,8.2,55.5,9,54,7,53.5,4.5,52.5,3,51.3,1.6,50.8,0.2,49.6,-1.5,49.6,-1.6,48.7,-4.7,48.5,-2.5,47.3,-1,46,-1.5,43.5,-4,43.4,-9,43.5,-9.3,39,-9,37,-7,37.2,-5.6,36,-2,36.8,-0.5,38.5,0.2,40,3.2,41.8,3.5,43.3,6,43,8.5,44.4,10.5,43,12.5,41.5,15.5,40,16,38,17,39,16.7,40.2,18.5,40,16.5,41.5,13,43.5,12.4,45.3,13.7,45.6,15,44.8,19,42,19.5,40,21,38.5,22,36.6,23.5,37.8,24,40,26,40.8,29,41,28.2,42.5,28,43.5,29.7,45,30.7,46.5,33,46,32.5,45.3,33.6,44.4,36.5,45.2,35,46,38,47,37.5,45.5,39.5,43.5,41.5,41.8,41,41,36,41.3,33,42,30,41.2,29.1,41,27,40.5,26.2,40,26.8,38.5,27.5,36.8,30.5,36.5,33,36,36,36.7,35.8,35,35,33,34.3,31.3,34.9,29.5,35,28,37,25,39,21.5,41,18,42.8,15,43.3,12.7,45,12.8,48,14,52,16,55,17.5,57.8,19,59.8,22.5,58,23.7,56.4,25,56.3,26.3,54.5,24.2,52,24,51.5,25.8,50.7,24.7,50,26.5,48,29.5,50,30,52,27.8,55,26.7,57,27,58,25.6,61.5,25.2,66.5,25.3,67.5,24,70,21,72.5,21,72.8,19,73.5,16,75,12.5,76.5,9,77.5,8,79,9.5,80,12,80.2,15,83,17.5,86.5,20,88,21.7,90,22,92,21.5,94.3,17.5,95.5,15.8,97.5,16.5,98.5,12,98.3,8,100.4,5.5,101,3,103.5,1.4,104,2,103.3,4.5,100.5,7,99.3,10,100,13.5,102,12.5,105,10,105,8.7,106.7,10.4,109.3,12,108.8,15.5,106,19,106.6,20.5,108,21.6,110.5,21.3,114,22.4,117,23.5,119.5,25.5,121.8,29.5,122,31,120.5,33,119.3,35,122.5,37,120,37.8,118,38.2,118,39,121.5,39,121.5,40.8,124.4,40,125.2,38.5,126.5,35,127,34.5,129.3,35.3,128.3,38.5,127.5,39.8,130,42.5,132,43.2,135.5,44.5,140.5,49.5,140.5,53,137.5,54,135.5,54.7,139,57,143,59.4,149,59.6,155,59.5,154,60,157,61.5,160,61.5,163.3,62.5,163,61,160,60,156,57.5,155.7,54.5,156.7,51,158.5,53,162,55,163,57.5,163,59.8,170,60,172.5,61,179,62.3,180,64.5,187,64.5,190,66,190,70],
    // afrique
    [-5.8,35.8,-2,35.2,3,36.9,10,37.3,11,36.9,10,34.5,11,33,15,32.3,20,31,20,32.8,25,31.7,30,31.3,32.4,31.2,32.6,29.9,33.5,28,35.5,24,37.2,21,37.5,18.5,39.5,15,43,12,44,10.5,51,12,49,7,47,4,42,0,9,0,9.5,4,8.5,4.5,5.5,4.5,2,6.3,-2,4.8,-5,5.1,-7.5,4.4,-9.5,5.5,-13,8.5,-15,11,-16.8,12.5,-17.4,14.7,-16.3,16.5,-16.3,19.5,-17,21,-15,24,-13,27.8,-10,29.5,-9.5,32,-7,33.7],
    [32.4,31,34.3,31.3,34.9,29.5,34.3,27.8,33,28.5,32.6,30],
    // iles europe
    [-5.5,50.1,-3,50.7,1.3,51.2,1.7,52.7,0,53.2,-1.5,55,-2,56,-2,57.6,-4,57.7,-3.2,58.6,-5,58.6,-6,56.5,-5,55,-3,54.8,-3,53.4,-4.6,53.2,-4.2,52.2,-5.2,51.8,-3,51.3],
    [-10,52,-6.3,52.2,-6,53.5,-5.7,54.8,-7.5,55.3,-10,54],
    [8.3,39,9.6,39.2,9.6,41,8.3,41],
    [8.7,41.6,9.5,42,9.4,43,8.6,42.4],
    [12.5,38,15.6,38.2,15.2,36.7,12.5,37.6],
    [23.6,35.5,26.2,35.2,24.5,34.9],
    [32.4,34.8,34.5,35.6,34,34.9,33,34.6],
    [11,55.5,12.5,56,12.2,55,11.2,55.2],
    [18.2,57.2,19,57.9,18.8,57.2],
    // iles asie
    [130.9,34,133,35.5,136,36,137,37.3,139,38,140,40.5,141.3,41.3,142,39.5,141,38,140.8,35.7,139.8,35,137,34.6,135.5,33.5,135,34.6,132.5,34.2],
    [130,33.5,131.8,33.5,131.3,31.3,130.3,31.3,129.8,33],
    [132.3,33.5,134.5,34.2,134.2,33.3,133,32.8],
    [140,41.5,140.3,43.3,141.7,45.4,145.3,44,145.5,43.2,143.2,42,141,42.5],
    [142,46,143.5,46.8,143,49.5,144.5,49,143,52,142.8,54.3,142,53.5,142,50],
    [120.1,23,121,25.2,122,25,121,22],
    [108.7,19.2,110.7,20.1,111,19.6,109.5,18.2],
    [120,16,120.5,18.5,122.2,18.4,122,16,124,13,121,13.7,120.5,14.5],
    [122,7.5,123.5,8.7,125.5,9.7,126.5,7,125.5,5.7,124,6.5],
    [122,11,125,12.5,125.5,10.5,123,9.5,122,10.5],
    [117.3,8.4,119.5,11.3,119.5,10.5,117.8,8.5],
    [109,1.5,111,2,113,3.3,115.5,5.5,117,7,119,5,117.7,3.5,117.8,0,109,0],
    [95.3,5.7,97.5,5.2,100.3,2.5,104,0,100,0,97,3],
    [79.8,9,80.3,9.7,81.8,7.5,81,6.1,80,6,79.7,8],
    [53.3,12.5,54.5,12.6,54,12.3]
];

const water = [
    [-92,46.7,-88,48.8,-85,47.9,-84.6,46.6,-87,46.5,-90.5,46.6],
    [-87.8,42,-87,46,-85,46,-85.2,45,-86.5,43.5,-86.8,41.7],
    [-84.5,46,-81.5,46,-80,44.6,-82,43,-83.5,43.8,-83.3,45],
    [-83.3,41.6,-79,42.7,-79,43,-81,42.7,-83,42.1],
    [-79.7,43.3,-76.3,43.5,-76.3,44.2,-79,44],
    [-98,50.5,-96.5,50.5,-97,54,-99,53.5],
    [-117,61,-109,62.5,-111,62.7,-115,62.2],
    [-111,58.7,-105,59.4,-105,59,-110,58.5],
    [-125,65,-120,65.5,-118,66.5,-122,66.5],
    [33,66.5,37,66,40.5,66,40,64.7,37,63.9,35,64.3,34.5,65.5],
    [12.5,59,14,59,13.5,58.5],
    [30,60,33,60.5,32,61.5,30,61],
    [35,61,36,62.5,35,62],
    [50,46.5,53,46.5,53,45,51,44.5,50.5,43,52.5,41.8,53,40,53.8,37.2,51,36.8,49.2,37.5,49.5,40.3,47.7,43,47,45,48,46],
    [58.5,46.5,61,46.5,60,44,58.5,44],
    [103.7,51.6,105,51.6,110,55.5,109.5,55.8,108,54],
    [74,46.5,79,46.2,79,46,74.5,45.6],
    [76,42.6,78.3,42.4,78,42.2,76.5,42.3]
];

const lines = [
    [-123,49,-95,49,-89,48,-84,46.5,-82.5,42,-79,43,-75,45,-71,45,-69,47,-67.5,45.5],
    [-141,60,-141,70],
    [-117,32.5,-111,31.3,-108,31.5,-106.5,31.7,-103,29,-101,29.7,-97.2,26],
    [-120,49,-120,60],[-110,49,-110,60],[-102,49,-102,60],[-141,60,-95,60],[-89,48,-89,56.5],
    [-104,41,-104,49],[-111,41,-111,49],[-116,42,-116,49],[-124,42,-104,42],[-111,37,-94,37],[-94,37,-94,33],[-103,32,-103,41],[-114,37,-111,37],[-120,39,-120,42],[-120,39,-114.5,35],[-97,49,-97,43],[-91,43,-91,36],[-104,43,-91,43],[-103,36.5,-75,36.5],[-88,42,-88,31],[-85,41.7,-85,31],[-80.5,42,-80.5,39],
    [-92,18,-91,14.5],[-89,18,-88.5,16],[-89,14,-83.5,15],[-85.5,11,-83.7,11],[-83,8.5,-82.5,9.5],
    [-73,12,-72,7,-67,6,-67,2],[-60,8.5,-61,5],
    [22,70,30,60],[12,60,18,68],[30,60,28,56,24,54,23.5,50,22.5,48,27,48,30,46],[14.5,54,15,51,12,50,8,48,6,49,3,51],[-1.5,43.5,3.2,42.5],[-7,42,-7,37],[6.5,46,10,46,14,46.5,19,46,22,48],[19,42,23,41,26,41],[26,44,29,44],[22,44,22,41],
    [30,52,40,50,40,47],[24,54,30,52],[28,56,30,60],
    [47,50,55,51,61,54,71,55,77,53,87,49,92,50,98,52,106,50,116,49.8,120,53,126,53,131,48,135,48,131,43],
    [87,49,96,43,105,41.5,112,45,119,47,116,49.8],[74,39,80,42,82,45,87,49],[67,37,74,37,80,42],[61,36,61,31,66,29,71,33,74,37,78,33,79,30,88,27.5,97,28,98,24,100,21.5,106,23,108,21.6],
    [53,42,56,45,58,45.5,66,41,73,40],[61,36,66,37.5,73,37.5],[45,39,48,38.5,45,35,48,30],[36,36.7,42,37,45,39],[42,37,41,34,39,32,37,30],[47,29,45,29,38,32],[52,24,55,22,55,20,52,19],[44,17,52,19],
    [-13,27.8,-8.7,27.7,-8.7,29],[-5,25,-12,23,-13,21,-17,21],[-2,35,-1,32,-8.7,27.7],[-5,25,4,19,12,23.5,15,23],[-12,15,-5,15,-5,10,-2,10,-3,5],[4,19,3,12,3,6.5],[12,23.5,10,30,8,32,8.5,37],[10,30,12,33],[25,31.7,25,20],[25,22,37,22],[24,20,24,15,22,13,24,9,27,5],[15,23,14,13,15,8,18,5],[34,10,36,14,37.5,18],[34,10,34,4,41,4,42,0],[43,12,42,4]
];

const labels = [
    ['CANADA',651,119,10],['UNITED STATES',716,414,10],['NORWAY',1659,118],['UNITED',1554,218],['KINGDOM',1554,228],['IRELAND',1515,249],
    ['NETHERLANDS',1632,258],['GERMANY',1674,273],['BELGIUM',1624,280],['LUXEMBOURG',1636,291],['FRANCE',1599,333],['MONACO',1646,368],['ANDORRA',1595,382],
    ['SPAIN',1541,419],['GIBRALTAR',1540,453],['TUNISIA',1663,478],['MOROCCO',1521,505],['ALGERIA',1610,537],['MEXICO',703,578,10],['CUBA',885,584],
    ['DOMINICAN',976,617],['REPUBLIC',976,626],['JAMAICA',915,629],['BELIZE',818,638],['HONDURAS',841,655],['EL SALVADOR',816,671],['NICARAGUA',844,681],
    ['COSTA',857,695],['RICA',857,704],['PANAMA',882,714],['VENEZUELA',1013,719],['MAURITANIA',1503,609],['MALI',1563,645],['NIGER',1664,633],
    ['BURKINA',1568,679],['FASO',1568,688],['BENIN',1619,705],['NIGERIA',1660,705],['GHANA',1574,719],['IVORY',1535,714],['COAST',1535,723],['GUINEA',1491,695],
    ['THE',1450,666],['GAMBIA',1450,674],['GUINEA-',1450,682],['BISSAU',1450,690],['SIERRA',1482,708],['LEONE',1482,717],['LIBERIA',1502,737],
    ['FINLAND',1806,78],['SWEDEN',1711,143],['ESTONIA',1800,158],['LATVIA',1796,189],['LITHUANIA',1789,213],['BELARUS',1820,241],['POLAND',1747,258],
    ['CZECHIA',1716,292],['SLOVAKIA',1750,305],['UKRAINE',1852,296],['AUSTRIA',1711,320],['HUNGARY',1750,326],['MOLDOVA',1828,325],['ROMANIA',1795,341],
    ['SLOVENIA',1717,339],['CROATIA',1717,348],['SERBIA',1758,363],['BULGARIA',1803,382],['NORTH',1769,390],['MACEDONIA',1769,398],['GREECE',1773,423],
    ['TURKEY',1886,419],['GEORGIA',1962,392],['ARMENIA',1968,402],['KAZAKHSTAN',2158,314],['MONGOLIA',2478,330],['UZBEKISTAN',2133,396],['KYRGYZSTAN',2227,394],
    ['TURKMENISTAN',2094,418],['TAJIKISTAN',2192,427],['CHINA',2487,466,10],['NORTH',2678,403],['KOREA',2678,412],['SOUTH KOREA',2683,449],['JAPAN',2783,449],
    ['CYPRUS',1870,466],['SYRIA',1920,470],['LEBANON',1892,477],['IRAQ',1963,487],['IRAN',2053,490],['AFGHANISTAN',2152,479],['PAKISTAN',2197,514],['NEPAL',2307,533],
    ['BHUTAN',2362,541],['ISRAEL',1884,508],['KUWAIT',1992,524],['LIBYA',1739,548],['EGYPT',1835,554],['SAUDI ARABIA',1948,559],['UNITED',2048,566],['ARAB',2048,575],
    ['EMIRATES',2048,584],['OMAN',2075,603],['BANGLADESH',2360,571],['TAIWAN',2626,575],['INDIA',2261,590],['LAOS',2475,612],['MYANMAR',2411,638],['VIETNAM',2514,649],
    ['THAILAND',2451,658],['CAMBODIA',2487,679],['PHILIPPINES',2641,677],['YEMEN',1996,645],['ERITREA',1910,649],['CHAD',1747,652],['SUDAN',1836,661],['DJIBOUTI',1951,686],
    ['ETHIOPIA',1915,700],['SOMALIA',2007,716],['SOUTH',1838,716],['SUDAN',1838,725],['CENTRAL',1755,719],['AFRICAN',1755,727],['REPUBLIC',1755,735],['SRI LANKA',2278,723]
];

const BLUE = '#29b6f6', GREY = '#90a4ae', INDIGO = '#5c6bc0', PURPLE = '#aa00ff', AMBER = '#ffa726', NAVY = '#1e88e5';
const markers = [
    [1581,268,3,GREY],[1626,256,2,BLUE],[1665,271,3,GREY],[1657,287,2,INDIGO],[1637,292,2,INDIGO],[1662,347,3,PURPLE],
    [523,346,2.5,GREY],[945,403,3,NAVY],[868,409,2.5,AMBER],[768,421,2.5,GREY],[909,426,3,PURPLE],[1503,426,2.5,AMBER],
    [1611,447,3,PURPLE],[1594,464,2.5,PURPLE],[563,475,3,GREY],[692,606,3,AMBER],[1905,207,3,PURPLE],[1895,225,2.5,PURPLE],
    [2199,273,2.5,PURPLE],[1798,340,3,AMBER],[1784,380,3,BLUE],[1853,516,2.5,PURPLE],[1842,648,3,PURPLE],[2564,468,3,AMBER],
    [2630,504,3,PURPLE],[2624,509,2,AMBER],[2626,567,2,AMBER]
];

function shape(list, closed, shift) {
    let d = '';
    list.forEach(function (pts) {
        for (let i = 0; i < pts.length; i += 2) {
            d += (i ? 'L' : 'M') + (px(pts[i]) + shift).toFixed(1) + ' ' + py(pts[i + 1]).toFixed(1);
        }
        if (closed) d += 'Z';
    });
    return d;
}

function add(svg, tag, attrs, text) {
    const el = document.createElementNS(NS, tag);
    for (const k in attrs) el.setAttribute(k, attrs[k]);
    if (text) el.textContent = text;
    svg.appendChild(el);
}

const svg = document.getElementById('world');
[-WORLD, 0, WORLD].forEach(function (shift) {
    add(svg, 'path', { d: shape(land, true, shift), fill: '#0b0b0b' });
    add(svg, 'path', { d: shape(water, true, shift), fill: '#262626' });
    add(svg, 'path', { d: shape(lines, false, shift), fill: 'none', stroke: '#181818', 'stroke-width': 1 });
});

labels.forEach(function (l) {
    add(svg, 'text', {
        x: l[1], y: l[2] + 3, 'text-anchor': 'middle', fill: '#363636',
        'font-family': 'Lato, Roboto, sans-serif', 'font-size': l[3] || 8.5
    }, l[0]);
});

// gros point sur la France + halo
add(svg, 'circle', { cx: 1569, cy: 314, r: 10, fill: '#29b6f6', opacity: 0.25 });
add(svg, 'circle', { cx: 1569, cy: 314, r: 6.5, fill: '#29b6f6' });
markers.forEach(function (m) {
    add(svg, 'circle', { cx: m[0], cy: m[1], r: m[2], fill: m[3] });
});
```
